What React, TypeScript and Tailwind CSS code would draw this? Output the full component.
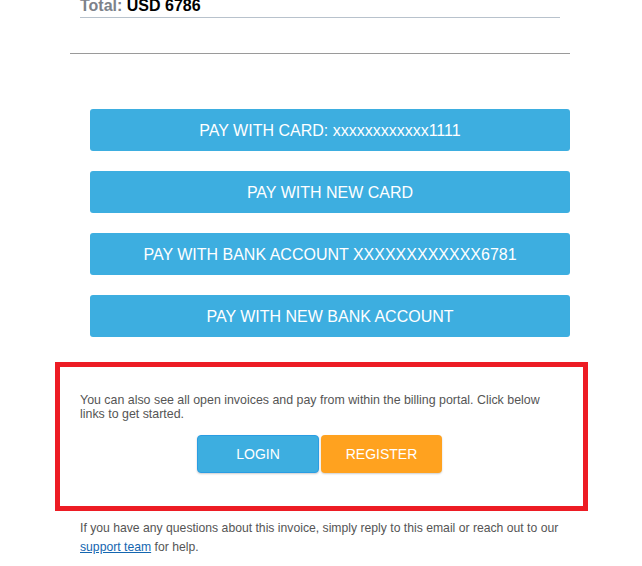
import React from "react";

const payButtons = [
  "PAY WITH CARD: xxxxxxxxxxxx1111",
  "PAY WITH NEW CARD",
  "PAY WITH BANK ACCOUNT XXXXXXXXXXXX6781",
  "PAY WITH NEW BANK ACCOUNT",
];

export default function App() {
  return (
    <div
      className="w-[642px] h-[566px] overflow-hidden bg-white"
      style={{ fontFamily: '"Liberation Sans", Arial, sans-serif' }}
    >
      <div className="mt-[-4px] ml-[80px] w-[480px] h-[22px] border-b border-[#b8c2cc]">
        <p className="text-[16px] leading-[20px] font-bold">
          <span className="text-[#7d828a]">Total: </span>
          <span className="text-black">USD 6786</span>
        </p>
      </div>

      <div className="mt-[35px] ml-[70px] w-[500px] h-px bg-[#9a9a9a]" />

      <div className="mt-[55px] ml-[90px] w-[480px] flex flex-col gap-[20px]">
        {payButtons.map((label) => (
          <button
            key={label}
            className="h-[42px] w-full rounded-[3px] bg-[#3daee0] text-white text-[16px] pt-px flex items-center justify-center"
          >
            {label}
          </button>
        ))}
      </div>

      <div className="mt-[25px] ml-[55px] w-[533px] h-[149px] border-[5px] border-[#ed1c24] pt-[26px] px-[20px]">
        <p className="w-[472px] text-[12.4px] leading-[14px] text-[#555555]">
          You can also see all open invoices and pay from within the billing portal. Click below
          links to get started.
        </p>
        <div className="mt-[14px] ml-[117px] flex gap-[2px]">
          <button className="w-[122px] h-[38px] rounded-[4px] bg-[#3daee0] border border-[#2a9de3] text-white text-[14px] flex items-center justify-center shadow-[0_1px_2px_rgba(0,0,0,0.2)]">
            LOGIN
          </button>
          <button className="w-[121px] h-[38px] rounded-[4px] bg-[#ffa21f] text-white text-[14px] flex items-center justify-center shadow-[0_1px_2px_rgba(0,0,0,0.2)]">
            REGISTER
          </button>
        </div>
      </div>

      <p className="mt-[8px] ml-[80px] w-[490px] text-[12.2px] leading-[19px] text-[#555555]">
        If you have any questions about this invoice, simply reply to this email or reach out to our{" "}
        <a href="#" className="text-[#1466b0] underline">
          support team
        </a>{" "}
        for help.
      </p>
    </div>
  );
}
